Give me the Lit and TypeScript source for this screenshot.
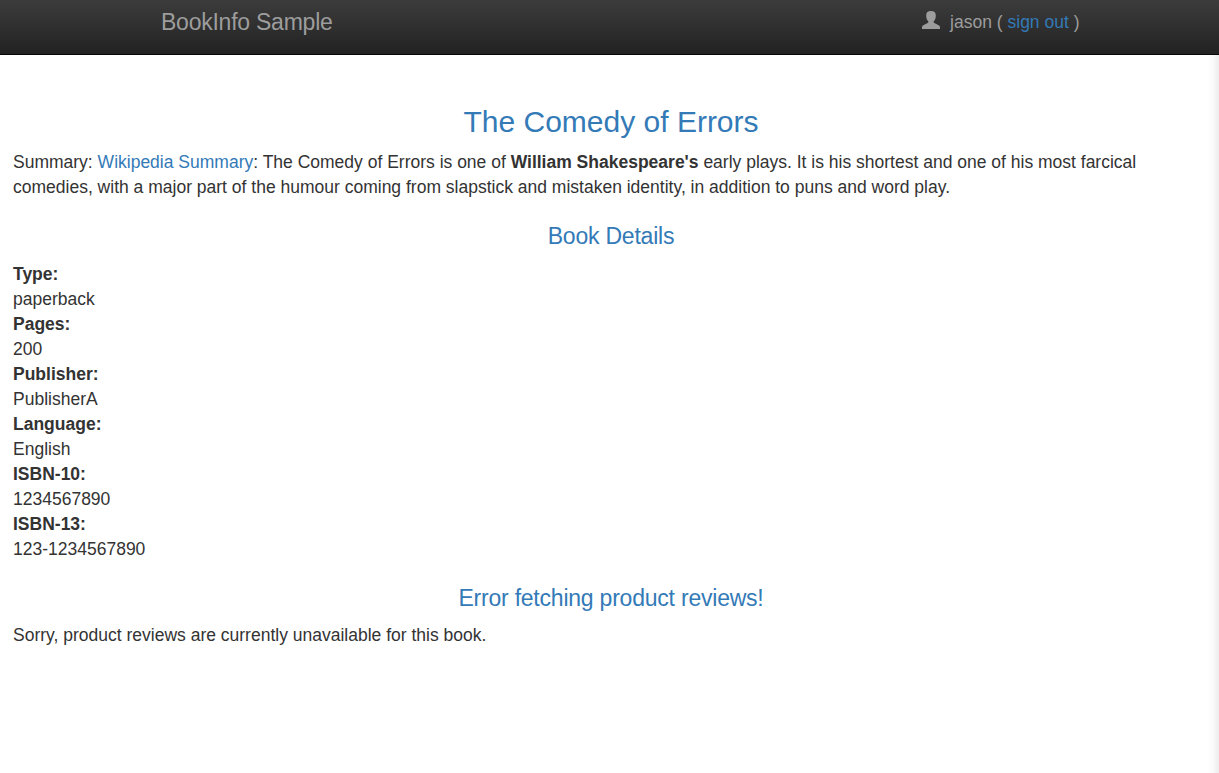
import { LitElement, html, css } from "lit";
import { customElement } from "lit/decorators.js";

const details: [string, string][] = [
  ["Type:", "paperback"],
  ["Pages:", "200"],
  ["Publisher:", "PublisherA"],
  ["Language:", "English"],
  ["ISBN-10:", "1234567890"],
  ["ISBN-13:", "123-1234567890"],
];

@customElement("app-root")
export class AppRoot extends LitElement {
  static styles = css`
    :host {
      display: block;
      box-sizing: border-box;
      height: 773px;
      overflow: hidden;
      background: linear-gradient(to left, #ececec, #fafafa 6px, #fff 12px);
      font: 17.5px/25px "Liberation Sans", Arial, sans-serif;
      color: #333;
    }
    a { color: #337ab7; text-decoration: none; }
    .nav {
      display: flex;
      justify-content: space-between;
      box-sizing: border-box;
      height: 55px;
      padding: 10px 139.5px 0 161px;
      background: linear-gradient(#3c3c3c, #222);
      border-bottom: 1px solid #080808;
      color: #9d9d9d;
    }
    .brand { font-size: 23px; letter-spacing: -0.24px; color: #9d9d9d; }
    .user { display: flex; white-space: pre; }
    .icon { width: 18px; height: 18px; margin: 1px 10px 0 0; fill: #9d9d9d; }
    main { padding: 47px 10px 0 13px; }
    h3, h4, p, dl, dd { margin: 0; font-weight: 400; }
    h3 { font-size: 30px; line-height: 40px; text-align: center; color: #337ab7; }
    h4 { font-size: 23px; letter-spacing: -0.22px; line-height: 26px; text-align: center; color: #337ab7; }
    .summary { padding-top: 8px; }
    .heading { padding: 23px 0 13px; }
    .error { padding: 23px 0 12px; }
    dt { font-weight: 700; }
  `;

  render() {
    return html`
      <nav class="nav">
        <a class="brand">BookInfo Sample</a>
        <div class="user"><svg class="icon" viewBox="0 0 18 18"><path d="M9 0C5.800 0 4.200 1.500 4.200 4.300c0 2.900.6 4.600 1.800 5.700.7.8.5 1.500-.3 2L1.800 13.900C.5 14.600 0 15.300 0 16.400V18h18v-1.600c0-1.100-.5-1.800-1.800-2.500l-3.900-1.900c-.8-.5-1-1.200-.3-2 1.200-1.100 1.800-2.800 1.800-5.700C13.800 1.500 12.200 0 9 0Z"/></svg><span>jason ( <a>sign out</a> )</span></div>
      </nav>
      <main>
        <h3>The Comedy of Errors</h3>
        <p class="summary">Summary: <a>Wikipedia Summary</a>: The Comedy of Errors is one of <b>William Shakespeare's</b> early plays. It is his shortest and one of his most farcical comedies, with a major part of the humour coming from slapstick and mistaken identity, in addition to puns and word play.</p>
        <h4 class="heading">Book Details</h4>
        <dl>${details.map(([k, v]) => html`<dt>${k}</dt><dd>${v}</dd>`)}</dl>
        <h4 class="error">Error fetching product reviews!</h4>
        <p>Sorry, product reviews are currently unavailable for this book.</p>
      </main>
    `;
  }
}
